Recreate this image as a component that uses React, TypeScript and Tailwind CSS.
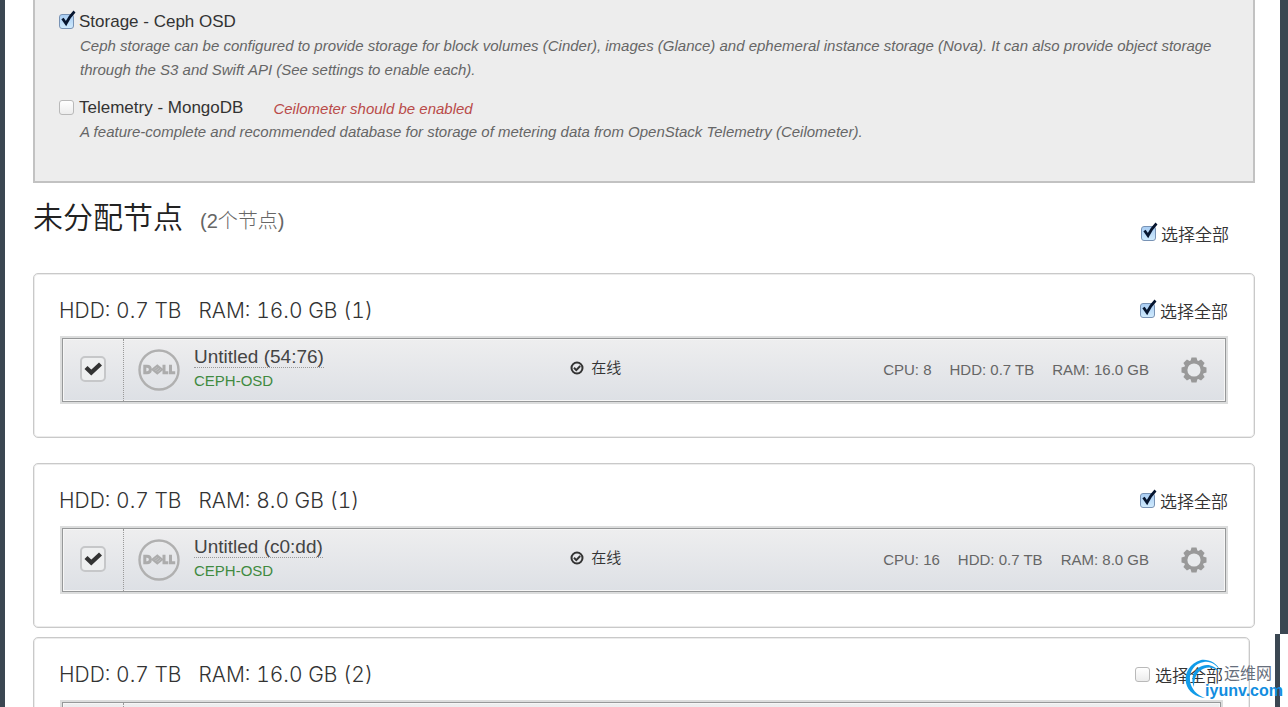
import React, { useId, useState } from "react";

const SANS = "font-['Liberation_Sans','Noto_Sans_CJK_SC',sans-serif]";

function AquaCheckbox({ id, initial }: { id: string; initial: boolean }) {
  const [checked, setChecked] = useState(initial);
  return (
    <span className="relative inline-block h-[15px] w-4 shrink-0">
      <input
        id={id}
        type="checkbox"
        checked={checked}
        onChange={(e) => setChecked(e.target.checked)}
        className="block h-[15px] w-[15px] appearance-none rounded-[3px] border border-[#b9b9b9] bg-linear-to-b from-white to-[#ececec] checked:border-[#7893b5] checked:from-[#a9cdf3] checked:to-[#cfeafd]"
      />
      {checked && (
        <svg viewBox="0 0 20 20" className="pointer-events-none absolute -top-1 left-0 h-5 w-5">
          <path d="M3.500 8.500 L7 13.500 C9 9.500 11.500 5.500 15.500 1.500" fill="none" stroke="#06152f" strokeWidth="2.800" />
        </svg>
      )}
    </span>
  );
}

function SelectAll({ initial }: { initial: boolean }) {
  const id = useId();
  return (
    <div className="mr-px flex items-start gap-1 pt-1">
      <AquaCheckbox id={id} initial={initial} />
      <label htmlFor={id} className="text-[17px] leading-5 font-[350] text-[#333]">
        选择全部
      </label>
    </div>
  );
}

function Role({ name, initial, warning, children }: { name: string; initial: boolean; warning?: string; children: React.ReactNode }) {
  const id = useId();
  return (
    <div>
      <div className="flex items-center">
        <AquaCheckbox id={id} initial={initial} />
        <label htmlFor={id} className="pl-1 text-[17px] leading-[25px] text-[#333]">
          {name}
        </label>
        {warning && <span className="pt-0.5 pl-[30px] text-[15px] leading-5 text-[#b94a48] italic">{warning}</span>}
      </div>
      <p className="pl-[21px] text-[15px] leading-6 text-[#666] italic">{children}</p>
    </div>
  );
}

function DellLogo() {
  return (
    <svg viewBox="0 0 42 42" className="h-[42px] w-[42px] shrink-0" role="img" aria-label="Dell">
      <circle cx="21" cy="21" r="19.500" fill="none" stroke="#b0b0b0" strokeWidth="2.400" />
      <g fill="none" stroke="#acacac" strokeWidth="3">
        <path d="M6.800 17.300 V23.700 H9 C13.500 23.700 13.500 17.300 9 17.300 Z" />
        <path d="M14.300 20.500 L19.300 16.500 L24.300 20.500 L19.300 24.500 Z M16 21.800 L21 17.800 M17.500 23.200 L22.500 19.200" strokeWidth="1.800" />
        <path d="M26 15.800 V23.700 H30.300 M32.500 15.800 V23.700 H37.200" />
      </g>
    </svg>
  );
}

function Gear() {
  return (
    <svg viewBox="0 0 26 26" className="h-[26px] w-[26px]" aria-hidden="true">
      <g fill="#999">
        {[0, 45, 90, 135].map((a) => (
          <path key={a} d="M10.500 0.500 H15.500 L16.500 4 V22 L15.500 25.500 H10.500 L9.500 22 V4 Z" transform={`rotate(${a} 13 13)`} />
        ))}
        <circle cx="13" cy="13" r="10" />
      </g>
      <circle cx="13" cy="13" r="6.600" fill="#e8eaec" />
    </svg>
  );
}

type NodeInfo = { name: string; cpu: string; hdd: string; ram: string };

function NodeDetails({ node }: { node: NodeInfo }) {
  return (
    <>
      <div className="flex flex-[58] items-center gap-3.5 pl-3.5">
        <DellLogo />
        <div className="flex flex-col items-start pb-0.5">
          <button type="button" className="border-b border-dotted border-[#999] text-[19px] leading-5 text-[#444]">
            {node.name}
          </button>
          <div className="pt-0.5 text-[15px] leading-[21px] text-[#3f8a3f]">CEPH-OSD</div>
        </div>
      </div>
      <div className="flex flex-[42] items-center gap-[7px] pb-1 text-[15px] text-[#333]">
        <svg viewBox="0 0 14 14" className="h-3.5 w-3.5" aria-hidden="true">
          <circle cx="7" cy="7" r="5.500" fill="none" stroke="#333" strokeWidth="2" />
          <path d="M4 6.800 L6.300 9.100 L10.200 5" fill="none" stroke="#333" strokeWidth="2" />
        </svg>
        <span className="font-[350]">在线</span>
      </div>
      <div className="flex items-center gap-[18px] text-[15px] text-[#666]">
        <span>CPU: {node.cpu}</span>
        <span>HDD: {node.hdd}</span>
        <span>RAM: {node.ram}</span>
      </div>
      <button type="button" aria-label="Settings" className="ml-8">
        <Gear />
      </button>
    </>
  );
}

function NodeRow({ node }: { node?: NodeInfo }) {
  const [checked, setChecked] = useState(Boolean(node));
  return (
    <div className="mx-px border-2 border-[#dcdddd]">
      <div className="flex h-16 items-center border border-[#969899] bg-linear-to-b from-[#eeeeef] to-[#dde0e5] pr-[18px] shadow-[inset_0_0_0_1px_#f6f6f6]">
        <div className="flex w-[61px] shrink-0 items-center justify-center self-stretch border-r border-dotted border-[#999] pb-0.5">
          <span className="relative h-[26px] w-[26px]">
            <input
              type="checkbox"
              aria-label="Select node"
              checked={checked}
              onChange={(e) => setChecked(e.target.checked)}
              className="block h-[26px] w-[26px] appearance-none rounded-[5px] border-2 border-[#c6c7c9] bg-[#eeeff0]"
            />
            {checked && (
              <svg viewBox="0 0 26 26" className="pointer-events-none absolute inset-0">
                <path d="M6 11.500 L11.300 16.500 L20.500 8" fill="none" stroke="#333" strokeWidth="4.400" />
              </svg>
            )}
          </span>
        </div>
        {node && <NodeDetails node={node} />}
      </div>
    </div>
  );
}

function NodeGroup({ hdd, ram, initial, node }: { hdd: string; ram: string; initial: boolean; node?: NodeInfo }) {
  return (
    <section className="rounded-[5px] border border-[#c9c9c9] px-[25px] pt-[25px] pb-[33px] shadow-[inset_0_0_0_1px_#ececec]">
      <div className="flex h-[37px] items-start justify-between">
        <h2 className="flex gap-[17px] font-[Inter,sans-serif] text-[21px] leading-6 font-light text-[#333] tabular-nums">
          <span>HDD: {hdd}</span>
          <span>RAM: {ram}</span>
        </h2>
        <SelectAll initial={initial} />
      </div>
      <NodeRow node={node} />
    </section>
  );
}

function Watermark() {
  return (
    <div className="absolute right-[5px] bottom-[7px]" aria-hidden="true">
      <svg viewBox="0 0 42 42" className="absolute right-[57px] bottom-0 h-[42px] w-[42px]">
        <path d="M37 14 C33 4 24 1 17 2 C6 5 0 15 2 25 C4 34 12 39 21 40 C13 37 7 31 6 23 C5 13 11 5 20 4 C27 3 33 7 37 14Z" fill="#119be8" />
        <path d="M35 14 C30 6 21 5.500 15 9.500 C8 14 7 22 10 29 C10 20 13 13 20 10.500 C26 8 31 10 35 14Z" fill="#119be8" />
      </svg>
      <div className="relative flex flex-col items-end">
        <span className="pr-[11px] text-[16px] leading-[17px] text-[#666e7c]">运维网</span>
        <span className="text-[16px] leading-[18px] font-bold text-[#128de0]">iyunv.com</span>
      </div>
    </div>
  );
}

export default function App() {
  return (
    <div className={`relative h-screen overflow-hidden bg-white ${SANS}`}>
      <main>
        <div className="border-r-8 border-l-[5px] border-[#3b4752] pr-[25px] pb-1.5 pl-7">
          <div className="flex flex-col gap-[13px] border-2 border-t-0 border-[#c2c2c2] bg-[#ededed] px-6 pt-[9px] pb-[37px]">
            <Role name="Storage - Ceph OSD" initial={true}>
              Ceph storage can be configured to provide storage for block volumes (Cinder), images (Glance) and ephemeral instance storage
              (Nova). It can also provide object storage through the S3 and Swift API (See settings to enable each).
            </Role>
            <Role name="Telemetry - MongoDB" initial={false} warning="Ceilometer should be enabled">
              A feature-complete and recommended database for storage of metering data from OpenStack Telemetry (Ceilometer).
            </Role>
          </div>
          <div className="flex h-[90px] items-start justify-between pt-[15px] pr-[25px]">
            <h1 className="flex items-baseline gap-[17px] text-[30px] leading-10 font-[350] text-[#222]">
              未分配节点
              <small className="text-[20px] font-light text-[#666]">(2个节点)</small>
            </h1>
            <div className="pt-6">
              <SelectAll initial={true} />
            </div>
          </div>
          <div className="flex flex-col gap-[25px]">
            <NodeGroup hdd="0.7 TB" ram="16.0 GB (1)" initial={true} node={{ name: "Untitled (54:76)", cpu: "8", hdd: "0.7 TB", ram: "16.0 GB" }} />
            <NodeGroup hdd="0.7 TB" ram="8.0 GB (1)" initial={true} node={{ name: "Untitled (c0:dd)", cpu: "16", hdd: "0.7 TB", ram: "8.0 GB" }} />
          </div>
        </div>
        <div className="mr-2 border-r-[5px] border-l-[5px] border-[#3b4752] pt-[3px] pr-[25px] pl-7">
          <NodeGroup hdd="0.7 TB" ram="16.0 GB (2)" initial={false} />
        </div>
      </main>
      <Watermark />
    </div>
  );
}
